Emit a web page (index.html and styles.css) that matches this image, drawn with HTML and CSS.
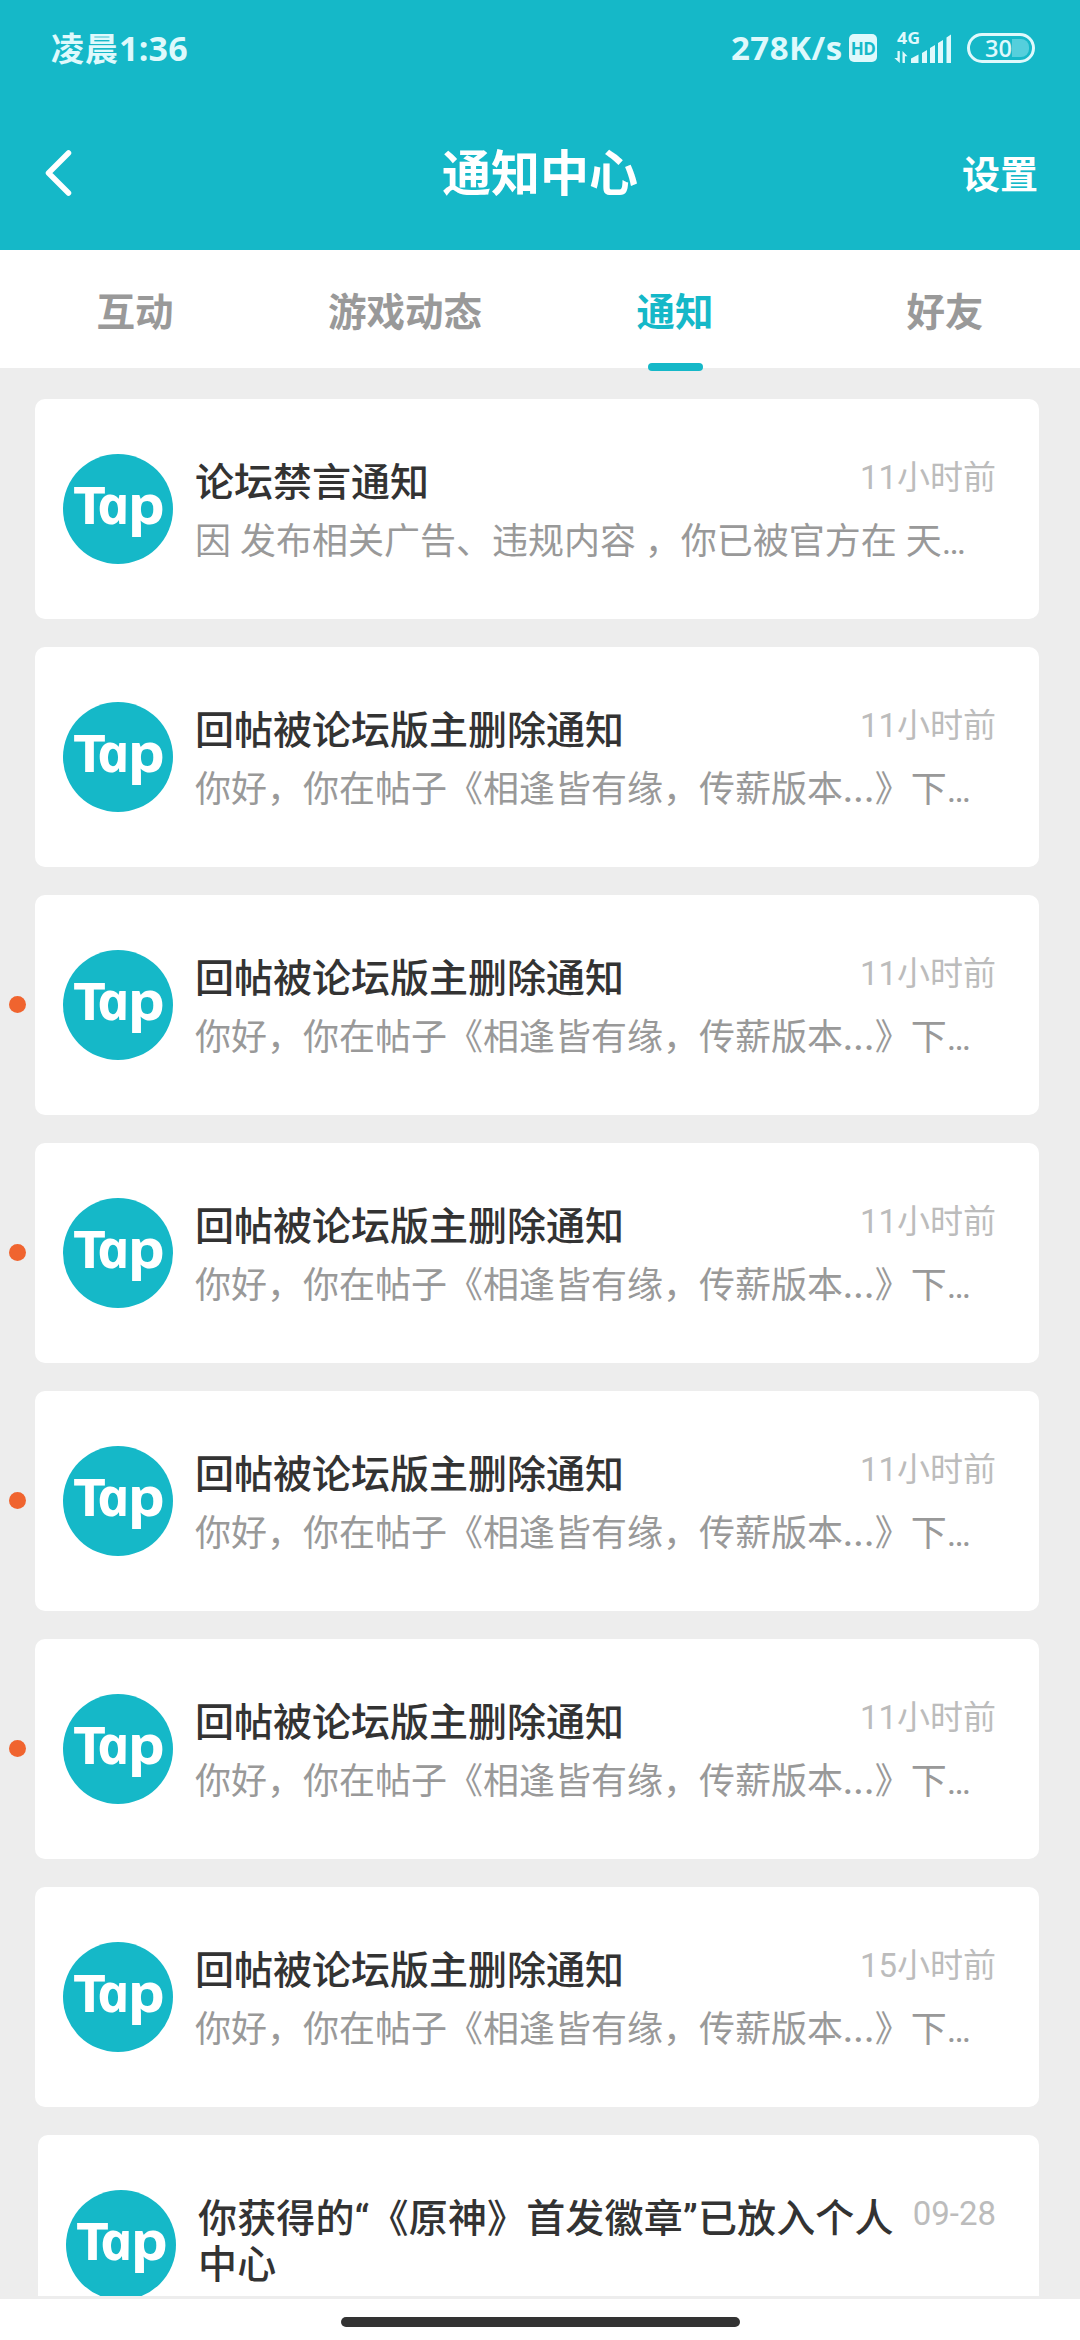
FILE: index.html
```html
<!DOCTYPE html>
<html lang="zh-CN">
<head>
<meta charset="utf-8">
<title>通知中心</title>
<link rel="stylesheet" href="styles.css">
</head>
<body>
<div class="screen">
  <header class="header">
    <div class="status">
      <span class="clock">凌晨<span class="clock-digits">1:36</span></span>
      <div class="indicators">
        <span class="speed">278K/s</span>
        <span class="hd">HD</span>
        <svg class="signal" width="57" height="46" viewBox="0 -6 57 46" fill="#dff9fc">
          <text x="3" y="13" font-family="Open Sans, sans-serif" font-weight="700" font-size="15.5" textLength="23" lengthAdjust="spacingAndGlyphs">4G</text>
          <path d="M3.500 20h2.300v12l-5.500-5h3.200zM8.500 20l5 5.200h-2.600V32H8.500z"/>
          <path d="M17 27.500l7.500-4V32H17zM28 22l5-3v13h-5zM36 17l5-3v18h-5zM44 12l5-3v23h-5zM52.500 6.500l4.500-3V32h-4.500z"/>
        </svg>
        <div class="battery"><span>30</span><i class="level"></i></div>
      </div>
    </div>
    <div class="bar">
      <svg class="back" width="28" height="48" viewBox="0 0 28 48" fill="none" stroke="#fff" stroke-width="5.500" stroke-linecap="round" stroke-linejoin="round"><path d="M23.500 4L3.500 24l20 20"/></svg>
      <h1 class="heading">通知中心</h1>
      <span class="settings">设置</span>
    </div>
  </header>
  <nav class="tabs">
    <span class="tab">互动</span>
    <span class="tab">游戏动态</span>
    <span class="tab active">通知</span>
    <span class="tab">好友</span>
  </nav>
  <main class="list">
    <div class="row">
      <div class="gutter"></div>
      <article class="card">
        <svg class="avatar" viewBox="0 0 110 110">
          <g id="tap">
            <circle cx="55" cy="55" r="55" fill="#15b8c8"/>
            <g class="logo-text">
              <text x="10" y="69.500" font-size="52" textLength="33" lengthAdjust="spacingAndGlyphs">T</text>
              <text transform="translate(37 69.500) skewX(12) scale(1.04 1)" font-size="53" font-style="italic">a</text>
              <text x="64.500" y="69.500" font-size="53" textLength="37.500" lengthAdjust="spacingAndGlyphs">p</text>
            </g>
          </g>
        </svg>
        <div class="content"><h2 class="title">论坛禁言通知</h2><p class="text">因 发布相关广告、违规内容 ，你已被官方在 天…</p></div>
        <time class="time">11小时前</time>
      </article>
    </div>
    <div class="row">
      <div class="gutter"></div>
      <article class="card">
        <svg class="avatar"><use href="#tap"/></svg>
        <div class="content"><h2 class="title">回帖被论坛版主删除通知</h2><p class="text">你好，你在帖子《相逢皆有缘，传薪版本<span class="dots">...</span>》下…</p></div>
        <time class="time">11小时前</time>
      </article>
    </div>
    <div class="row">
      <div class="gutter"><i class="dot"></i></div>
      <article class="card">
        <svg class="avatar"><use href="#tap"/></svg>
        <div class="content"><h2 class="title">回帖被论坛版主删除通知</h2><p class="text">你好，你在帖子《相逢皆有缘，传薪版本<span class="dots">...</span>》下…</p></div>
        <time class="time">11小时前</time>
      </article>
    </div>
    <div class="row">
      <div class="gutter"><i class="dot"></i></div>
      <article class="card">
        <svg class="avatar"><use href="#tap"/></svg>
        <div class="content"><h2 class="title">回帖被论坛版主删除通知</h2><p class="text">你好，你在帖子《相逢皆有缘，传薪版本<span class="dots">...</span>》下…</p></div>
        <time class="time">11小时前</time>
      </article>
    </div>
    <div class="row">
      <div class="gutter"><i class="dot"></i></div>
      <article class="card">
        <svg class="avatar"><use href="#tap"/></svg>
        <div class="content"><h2 class="title">回帖被论坛版主删除通知</h2><p class="text">你好，你在帖子《相逢皆有缘，传薪版本<span class="dots">...</span>》下…</p></div>
        <time class="time">11小时前</time>
      </article>
    </div>
    <div class="row">
      <div class="gutter"><i class="dot"></i></div>
      <article class="card">
        <svg class="avatar"><use href="#tap"/></svg>
        <div class="content"><h2 class="title">回帖被论坛版主删除通知</h2><p class="text">你好，你在帖子《相逢皆有缘，传薪版本<span class="dots">...</span>》下…</p></div>
        <time class="time">11小时前</time>
      </article>
    </div>
    <div class="row">
      <div class="gutter"></div>
      <article class="card">
        <svg class="avatar"><use href="#tap"/></svg>
        <div class="content"><h2 class="title">回帖被论坛版主删除通知</h2><p class="text">你好，你在帖子《相逢皆有缘，传薪版本<span class="dots">...</span>》下…</p></div>
        <time class="time">15小时前</time>
      </article>
    </div>
    <div class="row">
      <div class="gutter wide"></div>
      <article class="card">
        <svg class="avatar"><use href="#tap"/></svg>
        <div class="content"><h2 class="title long">你获得的“《原神》首发徽章”已放入个人<br>中心</h2></div>
        <time class="time">09-28</time>
      </article>
    </div>
  </main>
  <footer class="home"><div class="home-bar"></div></footer>
</div>
</body>
</html>
```

FILE: styles.css
```css
* { box-sizing: border-box; margin: 0; padding: 0; }
body {
  width: 1080px;
  height: 2340px;
  overflow: hidden;
  background: #ededed;
  font-family: Roboto, "Noto Sans CJK SC", sans-serif;
  text-spacing-trim: space-all;
}
.screen { display: flex; flex-direction: column; height: 2340px; }

.header { height: 250px; background: #15b8c8; color: #fff; }
.status {
  display: flex;
  justify-content: space-between;
  height: 96px;
  padding: 0 45px 0 51px;
  color: #dff9fc;
  align-items: center;
  font-family: "Open Sans", "Noto Sans CJK SC", sans-serif;
  font-weight: 700;
}
.clock { font-size: 33px; line-height: 40px; letter-spacing: 1px; white-space: nowrap; }
.clock-digits { font-size: 34px; letter-spacing: 0.2px; }
.indicators { display: flex; align-items: center; }
.speed { font-size: 33px; line-height: 40px; width: 118px; letter-spacing: 0.5px; white-space: nowrap; }
.hd {
  width: 28px;
  height: 28px;
  border-radius: 5px;
  background: #dff9fc;
  color: #15b8c8;
  font-size: 17px;
  line-height: 29px;
  text-align: center;
  letter-spacing: -0.5px;
}
.signal { margin: 0 16px 0 17px; }
.battery {
  display: flex;
  align-items: center;
  width: 68px;
  height: 30px;
  padding-left: 15px;
  border: 3px solid #dff9fc;
  border-radius: 15px;
  font-size: 23.5px;
  font-weight: 600;
  line-height: 24px;
}
.level { width: 17px; height: 18px; border-radius: 0 8px 8px 0; background: #55cfdc; }

.bar { display: grid; grid-template-columns: 200px 1fr 200px; align-items: center; height: 154px; }
.back { margin: 0 0 0 45px; }
.heading { padding-top: 3px; font-size: 49px; font-weight: 700; line-height: 60px; text-align: center; }
.settings { padding: 3px 42px 0 0; font-size: 38px; font-weight: 700; line-height: 50px; text-align: right; }

.tabs { display: grid; grid-template-columns: repeat(4, 1fr); height: 118px; background: #fff; }
.tab {
  display: flex;
  flex-direction: column;
  align-items: center;
  height: 121px;
  padding-top: 35px;
  color: #999;
  font-size: 38.5px;
  font-weight: 700;
  line-height: 56px;
}
.active { color: #15b8c8; }
.active::after { content: ""; width: 55px; height: 8px; margin-top: 22px; border-radius: 4px; background: #15b8c8; flex: none; }

.list { display: flex; flex-direction: column; gap: 28px; height: 1928px; padding-top: 31px; overflow: hidden; }
.row { display: flex; flex: none; height: 220px; padding-right: 41px; }
.gutter { display: flex; align-items: center; width: 35px; padding: 0 0 1px 9px; flex: none; }
.wide { width: 38px; }
.dot { width: 17px; height: 17px; border-radius: 50%; background: #f0642f; }
.card { display: flex; flex: 1; min-width: 0; padding: 55px 43px 0 28px; border-radius: 10px; background: #fff; }
.avatar { width: 110px; height: 110px; flex: none; }
.logo-text { fill: #fff; font-family: "Open Sans", sans-serif; font-weight: 700; }
.content { flex: 1; min-width: 0; padding: 6px 0 0 22px; }
.title { font-size: 39px; font-weight: 500; line-height: 46px; color: #333; white-space: nowrap; }
.long { letter-spacing: 0.15px; }
.text { margin-top: 14px; font-size: 36px; line-height: 44px; color: #999; font-weight: 400; white-space: nowrap; }
.dots { letter-spacing: 0.6px; font-weight: 500; }
.time { flex: none; padding-top: 4px; font-size: 33px; line-height: 40px; color: #bcbcbc; white-space: nowrap; }

.home { display: flex; justify-content: center; height: 41px; margin-top: 3px; padding-top: 18px; background: #fff; }
.home-bar { width: 399px; height: 10px; border-radius: 5px; background: #333; }
```
